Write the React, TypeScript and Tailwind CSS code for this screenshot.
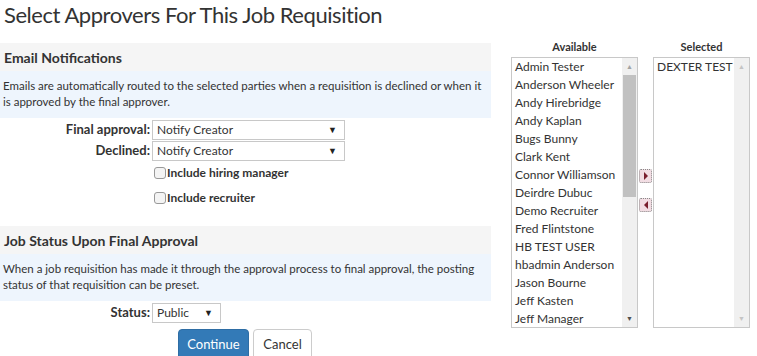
import React from 'react';

const available = [
  'Admin Tester',
  'Anderson Wheeler',
  'Andy Hirebridge',
  'Andy Kaplan',
  'Bugs Bunny',
  'Clark Kent',
  'Connor Williamson',
  'Deirdre Dubuc',
  'Demo Recruiter',
  'Fred Flintstone',
  'HB TEST USER',
  'hbadmin Anderson',
  'Jason Bourne',
  'Jeff Kasten',
  'Jeff Manager',
];

function FakeSelect({ value, width }: { value: string; width: string }) {
  return (
    <div
      className={`${width} h-[20px] border border-[#c8c8c8] bg-white flex items-center justify-between pl-[4px] pr-[7px] text-[12px] text-[#333]`}
    >
      <span>{value}</span>
      <span className="text-[9px] text-[#222]">▼</span>
    </div>
  );
}

function Scrollbar({ thumb }: { thumb: boolean }) {
  return (
    <div className="w-[15px] h-full bg-[#f0f0f0] flex flex-col items-center">
      <div className={`h-[17px] flex items-center justify-center text-[7px] ${thumb ? 'text-[#a3a3a3]' : 'text-[#c4c4c4]'}`}>▲</div>
      <div className="flex-1 w-full px-[1px]">
        {thumb && <div className="h-[122px] w-full bg-[#c1c1c1]" />}
      </div>
      <div className={`h-[17px] flex items-center justify-center text-[7px] ${thumb ? 'text-[#505050]' : 'text-[#c4c4c4]'}`}>▼</div>
    </div>
  );
}

function MoveButton({ dir }: { dir: 'right' | 'left' }) {
  return (
    <div className="w-[13px] h-[14px] border border-dotted border-[#888] rounded-[2px] bg-[#f2dde3] flex items-center justify-center">
      <svg width="6" height="8" viewBox="0 0 6 8">
        {dir === 'right' ? (
          <polygon points="1,0 5,4 1,8" fill="#7a1f2e" />
        ) : (
          <polygon points="5,0 1,4 5,8" fill="#7a1f2e" />
        )}
      </svg>
    </div>
  );
}

export default function App() {
  return (
    <div
      className="w-[757px] h-[356px] overflow-hidden bg-white text-[#333] relative"
      style={{ fontFamily: 'Lato, "Liberation Sans", sans-serif' }}
    >
      {/* Title */}
      <h1 className="pl-[4px] pt-[1px] text-[22px] tracking-[-0.45px] leading-[28px] font-normal text-[#333] h-[43px]">
        Select Approvers For This Job Requisition
      </h1>

      <div className="flex">
        {/* Left column */}
        <div className="w-[491px]">
          <div className="bg-[#f5f5f5] h-[28px] flex items-center pl-[4px] text-[14px] font-bold">
            Email Notifications
          </div>
          <div className="bg-[#eef5fd] h-[47px] pl-[3px] pt-[7px] text-[11.5px] leading-[16px]">
            Emails are automatically routed to the selected parties when a requisition is declined or when it
            is approved by the final approver.
          </div>

          <div className="pt-[1px]">
            <div className="flex items-center h-[21px]">
              <div className="w-[152px] text-right pr-[2px] text-[13px] font-bold">Final approval:</div>
              <FakeSelect value="Notify Creator" width="w-[193px]" />
            </div>
            <div className="flex items-center h-[21px]">
              <div className="w-[152px] text-right pr-[2px] text-[13px] font-bold">Declined:</div>
              <FakeSelect value="Notify Creator" width="w-[193px]" />
            </div>
            <div className="pl-[154px] pt-[5px] flex flex-col gap-[12px] text-[12px] font-bold">
              <label className="flex items-center h-[13px]">
                <span className="w-[12px] h-[12px] border border-[#999] rounded-[3px] bg-[#f4f4f4] mr-[1px]" />
                Include hiring manager
              </label>
              <label className="flex items-center h-[13px]">
                <span className="w-[12px] h-[12px] border border-[#999] rounded-[3px] bg-[#f4f4f4] mr-[1px]" />
                Include recruiter
              </label>
            </div>
          </div>

          <div className="mt-[22px] bg-[#f5f5f5] h-[28px] flex items-center pl-[4px] text-[14px] font-bold">
            Job Status Upon Final Approval
          </div>
          <div className="bg-[#eef5fd] h-[47px] pl-[3px] pt-[7px] text-[11.5px] leading-[16px]">
            When a job requisition has made it through the approval process to final approval, the posting
            status of that requisition can be preset.
          </div>

          <div className="flex items-center h-[21px] mt-[1px]">
            <div className="w-[152px] text-right pr-[2px] text-[13px] font-bold">Status:</div>
            <FakeSelect value="Public" width="w-[69px]" />
          </div>

          <div className="flex gap-[4px] pl-[178px] mt-[6px]">
            <button className="w-[71px] h-[32px] bg-[#337ab7] border border-[#2e6da4] rounded-[4px] text-white text-[13px]">
              Continue
            </button>
            <button className="w-[59px] h-[32px] bg-white border border-[#ccc] rounded-[4px] text-[#333] text-[13px]">
              Cancel
            </button>
          </div>
        </div>

        {/* Right column */}
        <div className="flex pl-[20px] -mt-[3px]">
          <div className="flex flex-col items-center">
            <div className="text-[11px] font-bold h-[14px] leading-[14px] mb-[3px]">Available</div>
            <div className="w-[127px] h-[271px] border border-[#c8c8c8] flex bg-white">
              <div className="flex-1 pl-[3px] pt-[0px] text-[12px] leading-[18px] whitespace-nowrap overflow-hidden">
                {available.map((n) => (
                  <div key={n}>{n}</div>
                ))}
              </div>
              <Scrollbar thumb />
            </div>
          </div>
          <div className="flex flex-col gap-[15px] pt-[129px] w-[15px] items-center">
            <MoveButton dir="right" />
            <MoveButton dir="left" />
          </div>
          <div className="flex flex-col items-center">
            <div className="text-[11px] font-bold h-[14px] leading-[14px] mb-[3px]">Selected</div>
            <div className="w-[97px] h-[271px] border border-[#c8c8c8] flex bg-white">
              <div className="flex-1 pl-[3px] pt-[0px] text-[12px] leading-[18px] whitespace-nowrap overflow-hidden">
                DEXTER TEST
              </div>
              <Scrollbar thumb={false} />
            </div>
          </div>
        </div>
      </div>
    </div>
  );
}
